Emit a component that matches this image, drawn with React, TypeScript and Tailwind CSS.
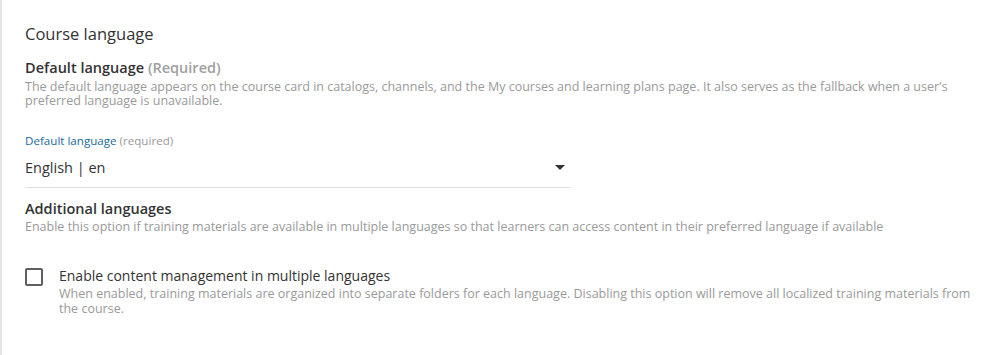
export default function App() {
  return (
    <div className="w-[1001px] h-[355px] bg-white border-l-2 border-[#e6e6e6] overflow-hidden" style={{ fontFamily: '"Open Sans", sans-serif' }}>
      <div className="pl-[23px] pr-[30px] pt-[23px]">
        <h2 className="text-[16.5px] leading-[22px] text-[#333333]">Course language</h2>
        <div className="mt-[13px] text-[14.5px] leading-[20px] text-[#333333] font-semibold">
          Default language <span className="text-[#a0a0a0]">(Required)</span>
        </div>
        <p className="mt-[2px] text-[12.5px] leading-[14px] text-[#9a9a9a] pr-[10px]">
          The default language appears on the course card in catalogs, channels, and the My courses and learning plans page. It also serves as the fallback when a user's preferred language is unavailable.
        </p>
        <div className="mt-[25px] w-[546px]">
          <div className="text-[11.6px] leading-[15px] text-[#1b6a9a]">
            Default language <span className="text-[#9a9a9a]">(required)</span>
          </div>
          <div className="mt-[10px] flex items-center justify-between border-b border-[#e0e0e0] pb-[9px]">
            <span className="text-[14.5px] leading-[20px] text-[#333333]">English | en</span>
            <svg width="10" height="6" viewBox="0 0 10 6" className="mr-[6px]"><path d="M0 0 L10 0 L5 5 Z" fill="#333" /></svg>
          </div>
        </div>
        <div className="mt-[11px] text-[14.5px] leading-[20px] text-[#333333] font-semibold">Additional languages</div>
        <p className="mt-[1px] text-[12.5px] leading-[14px] text-[#9a9a9a]">
          Enable this option if training materials are available in multiple languages so that learners can access content in their preferred language if available
        </p>
        <div className="mt-[32px] flex items-start gap-[16px]">
          <div className="mt-[2px] w-[18px] h-[18px] border-2 border-[#5f5f5f] rounded-[2px] shrink-0" />
          <div>
            <div className="text-[14px] leading-[20px] text-[#333333]">Enable content management in multiple languages</div>
            <p className="text-[12.5px] leading-[15px] text-[#9a9a9a]">
              When enabled, training materials are organized into separate folders for each language. Disabling this option will remove all localized training materials from the course.
            </p>
          </div>
        </div>
      </div>
    </div>
  );
}
